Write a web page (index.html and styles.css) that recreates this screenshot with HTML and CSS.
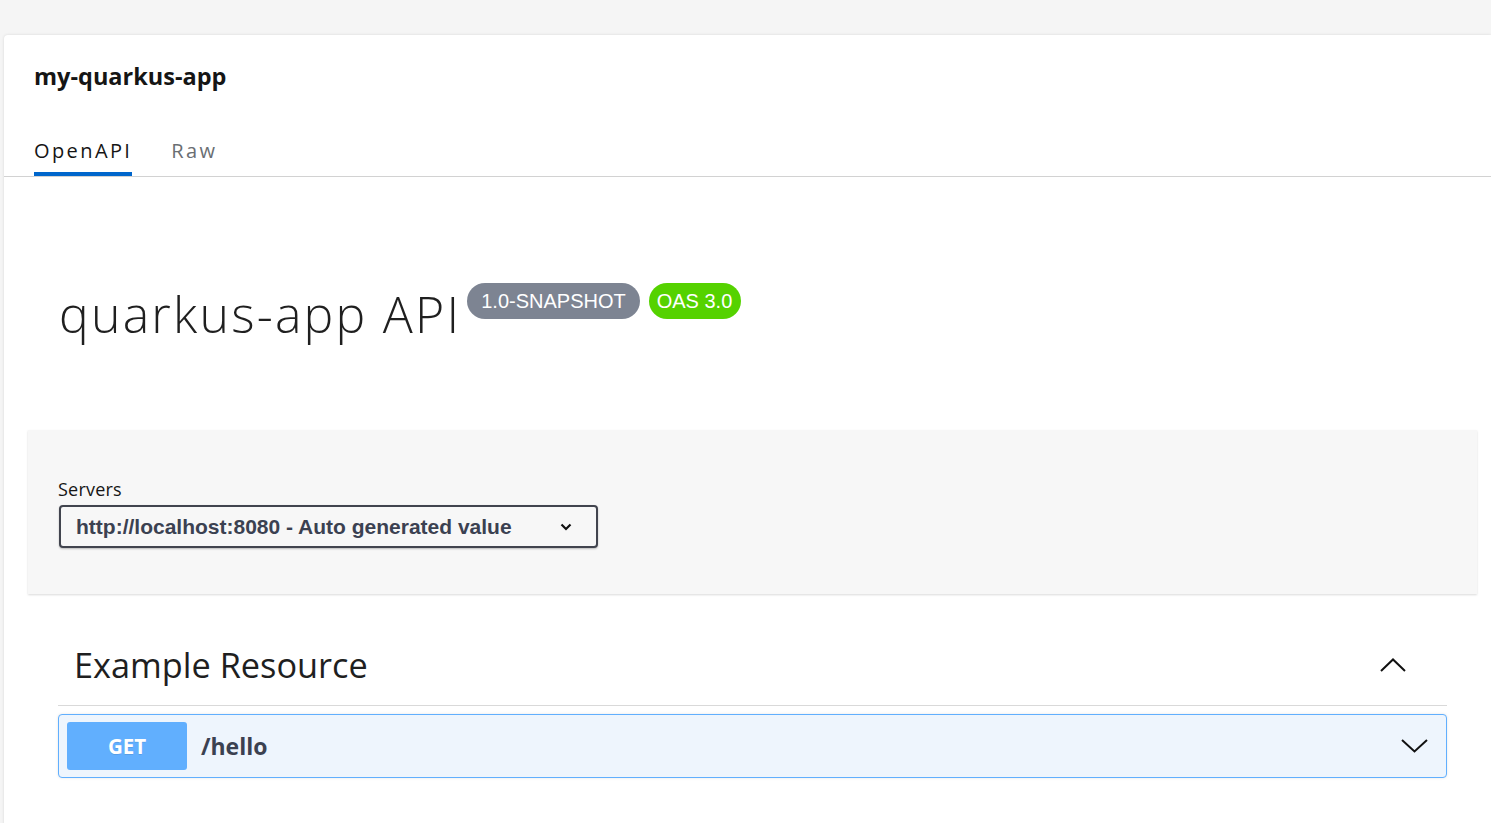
FILE: index.html
```html
<!DOCTYPE html>
<html lang="en">
<head>
<meta charset="utf-8">
<title>my-quarkus-app</title>
<link rel="stylesheet" href="styles.css">
</head>
<body>
<div class="card">
  <header class="card-head">
    <h1 class="app-name">my-quarkus-app</h1>
    <nav class="tabs">
      <a class="tab active">OpenAPI</a>
      <a class="tab">Raw</a>
    </nav>
  </header>
  <main class="swagger">
    <div class="info">
      <h2 class="title"><span class="title-text">quarkus-app API</span>
        <span class="badges"><span class="badge version">1.0-SNAPSHOT</span><span class="badge oas">OAS 3.0</span></span>
      </h2>
    </div>
    <section class="scheme">
      <label class="servers-label">Servers</label>
      <div class="select">
        <span class="select-value">http://localhost:8080 - Auto generated value</span>
        <svg class="select-arrow" width="12" height="8" viewBox="0 0 12 8"><polyline points="1.5,1.5 6,6 10.5,1.5" fill="none" stroke="#111" stroke-width="2.2"/></svg>
      </div>
    </section>
    <section class="tag-section">
      <h3 class="tag"><span>Example Resource</span>
        <svg class="tag-arrow" width="26" height="14" viewBox="0 0 26 14"><polyline points="1,13 13,1.5 25,13" fill="none" stroke="#111" stroke-width="2"/></svg>
      </h3>
      <div class="opblock">
        <span class="method">GET</span>
        <span class="path">/hello</span>
        <svg class="op-arrow" width="27" height="14" viewBox="0 0 27 14"><polyline points="1,1 13.5,12.5 26,1" fill="none" stroke="#111" stroke-width="2"/></svg>
      </div>
    </section>
  </main>
</div>
</body>
</html>
```
FILE: styles.css
```css
html, body {
  margin: 0;
  padding: 0;
}
body {
  background: #f5f5f5;
  font-family: "Open Sans", "Liberation Sans", sans-serif;
  color: #151515;
  overflow: hidden;
}
.card {
  margin: 35px 0 0 4px;
  background: #fff;
  border-radius: 4px 0 0 0;
  box-shadow: 0 0 3px rgba(0, 0, 0, 0.12);
  min-height: 800px;
}
.card-head {
  padding: 26px 0 0 30px;
  border-bottom: 1px solid #d2d2d2;
}
.app-name {
  margin: 0;
  font-size: 23.5px;
  font-weight: 700;
  line-height: 30px;
  color: #151515;
}
.tabs {
  display: flex;
  gap: 39px;
  margin-top: 40px;
}
.tab {
  font-size: 20px;
  line-height: 24px;
  letter-spacing: 2.4px;
  padding: 8px 0 9px;
  border-bottom: 4px solid transparent;
  color: #6a6e73;
}
.tab.active {
  color: #151515;
  font-weight: 500;
  border-bottom-color: #0066cc;
}
.swagger {
  width: 1449px;
  margin-left: 24px;
}
.info {
  padding: 108px 0 0 31px;
}
.title {
  display: flex;
  align-items: flex-start;
  margin: 0;
  font-weight: 300;
  font-size: 50px;
  line-height: 58px;
  color: #1f1f1f;
}
.title-text {
  letter-spacing: 2.2px;
}
.badges {
  display: flex;
  gap: 9px;
  margin: -2px 0 0 6px;
}
.badge {
  font-family: "Liberation Sans", Arial, sans-serif;
  font-size: 20px;
  font-weight: 400;
  line-height: 36px;
  height: 36px;
  border-radius: 18px;
  color: #fff;
  letter-spacing: 0;
}
.badge.version {
  background: #7d8492;
  padding: 0 14px;
}
.badge.oas {
  background: #55d200;
  padding: 0 9px 0 8px;
}
.scheme {
  margin-top: 87px;
  background: #f7f7f7;
  box-shadow: 0 1px 2px 0 rgba(0, 0, 0, 0.15);
  padding: 49px 30px 46px;
}
.servers-label {
  display: block;
  font-size: 18px;
  line-height: 20px;
  font-weight: 500;
  letter-spacing: 0.2px;
  color: #151515;
  margin-bottom: 6px;
}
.select {
  width: 539px;
  height: 43px;
  box-sizing: border-box;
  margin-left: 1px;
  border: 2px solid #41444e;
  border-radius: 4px;
  box-shadow: 0 1px 2px rgba(0, 0, 0, 0.25);
  display: flex;
  align-items: center;
  justify-content: space-between;
  padding: 0 24px 0 15px;
  background: #f7f7f7;
  font-family: "Liberation Sans", Arial, sans-serif;
  font-size: 21px;
  font-weight: 700;
  color: #3b4151;
}
.select-arrow {
  display: block;
}
.tag-section {
  margin: 0 30px;
}
.tag {
  display: flex;
  align-items: center;
  justify-content: space-between;
  margin: 40px 0 0;
  padding: 11px 41px 20px 16px;
  border-bottom: 1px solid #d9d9d9;
  font-size: 34.3px;
  line-height: 40px;
  font-weight: 400;
  color: #1f1f1f;
}
.tag-arrow {
  display: block;
}
.opblock {
  margin-top: 8px;
  display: flex;
  align-items: center;
  padding: 7px 18px 7px 8px;
  border: 1px solid #61affe;
  border-radius: 4px;
  background: #eef5fd;
  box-shadow: 0 0 3px rgba(0, 0, 0, 0.1);
}
.method {
  width: 120px;
  height: 48px;
  display: flex;
  align-items: center;
  justify-content: center;
  background: #61affe;
  border-radius: 3px;
  color: #fff;
  font-size: 20.5px;
  font-weight: 700;
  text-shadow: 0 1px 0 rgba(0, 0, 0, 0.1);
}
.path {
  margin-left: 14px;
  font-size: 23px;
  font-weight: 700;
  color: #3b4151;
  flex: 1;
}
.op-arrow {
  display: block;
}
```
